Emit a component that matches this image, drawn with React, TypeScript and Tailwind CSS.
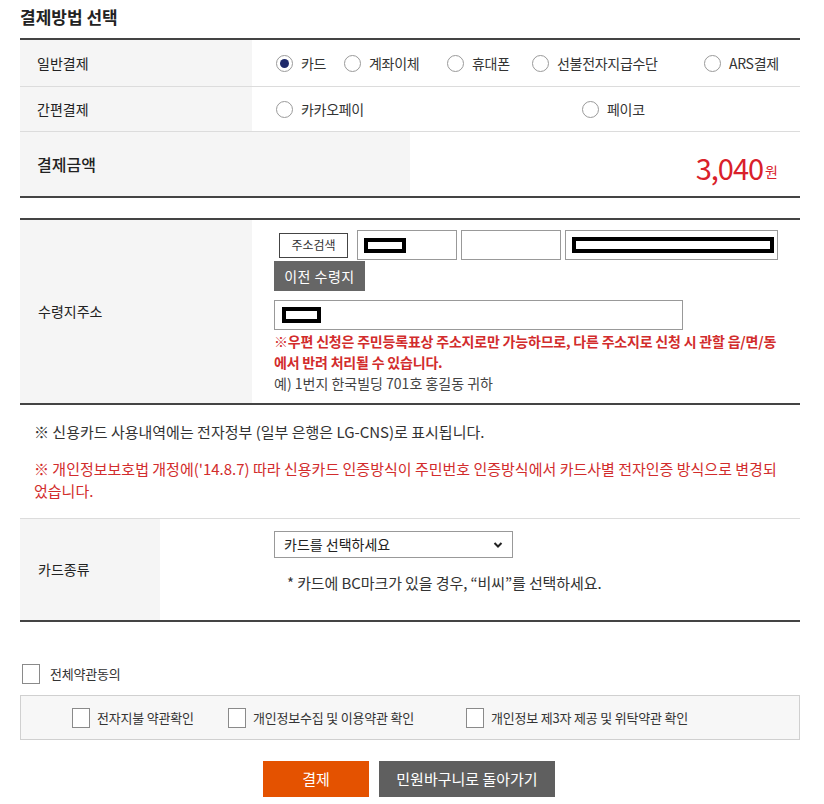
import React from "react";

const font = { fontFamily: '"Noto Sans CJK KR", "Noto Sans", sans-serif' };

function Radio({ checked = false, label, w }: { checked?: boolean; label: string; w: string }) {
  return (
    <label className={`flex items-center gap-[8px] ${w}`}>
      <span className="w-[17px] h-[17px] rounded-full border border-[#9a9a9a] bg-white flex items-center justify-center">
        {checked && <span className="w-[9px] h-[9px] rounded-full bg-[#1f2a6b]" />}
      </span>
      <span className="text-[14px] text-[#333] tracking-[-0.3px]">{label}</span>
    </label>
  );
}

function Check({ label, className = "" }: { label: string; className?: string }) {
  return (
    <label className={`flex items-center gap-[7px] ${className}`}>
      <span className="w-[18px] h-[20px] border border-[#8a8a8a] bg-white" />
      <span className="text-[13px] text-[#333] tracking-[-0.2px]">{label}</span>
    </label>
  );
}

function Redact({ className }: { className: string }) {
  return <span className={`block border-[4px] border-black bg-white ${className}`} />;
}

export default function App() {
  return (
    <div style={font} className="w-[824px] h-[804px] bg-white pl-[20px] pr-[24px] text-[#333] overflow-hidden">
      <h2 className="pt-[6px] h-[38px] text-[17px] font-bold text-[#222] leading-[22px]">결제방법 선택</h2>

      {/* 결제방법 */}
      <div className="border-t-2 border-[#444]">
        <div className="flex h-[47px] border-b border-[#dcdcdc]">
          <div className="w-[232px] bg-[#f5f5f5] flex items-center pl-[17px] text-[14px] text-[#222]">일반결제</div>
          <div className="flex-1 flex items-center pl-[24px]">
            <Radio checked label="카드" w="w-[68px]" />
            <Radio label="계좌이체" w="w-[103px]" />
            <Radio label="휴대폰" w="w-[85px]" />
            <Radio label="선불전자지급수단" w="w-[172px]" />
            <Radio label="ARS결제" w="w-[76px]" />
          </div>
        </div>
        <div className="flex h-[45px] border-b border-[#dcdcdc]">
          <div className="w-[232px] bg-[#f5f5f5] flex items-center pl-[17px] text-[14px] text-[#222]">간편결제</div>
          <div className="flex-1 flex items-center pl-[24px]">
            <Radio label="카카오페이" w="w-[306px]" />
            <Radio label="페이코" w="w-[80px]" />
          </div>
        </div>
        <div className="flex h-[66px] border-b-2 border-[#444]">
          <div className="w-[390px] bg-[#f5f5f5] flex items-center pl-[17px] text-[16px] font-medium text-[#222]">결제금액</div>
          <div className="flex-1 flex items-center justify-end pr-[22px] pt-[6px]">
            <span className="text-[29px] text-[#d9202a] leading-none tracking-[-1px]">3,040</span>
            <span className="text-[14px] text-[#d9202a] ml-[2px] mt-[8px]">원</span>
          </div>
        </div>
      </div>

      {/* 수령지주소 */}
      <div className="mt-[20px] border-t-2 border-[#444] border-b-2 border-b-[#444] flex h-[187px]">
        <div className="w-[232px] bg-[#f5f5f5] flex items-center pl-[18px] text-[14px] text-[#222]">수령지주소</div>
        <div className="flex-1 pl-[22px] pt-[10px]">
          <div className="flex items-center gap-[4px]">
            <button className="ml-[5px] mr-[5px] w-[69px] h-[25px] border border-[#444] bg-white text-[12px] text-[#333]">주소검색</button>
            <div className="w-[100px] h-[30px] border border-[#999] flex items-center pl-[6px]">
              <Redact className="w-[42px] h-[15px]" />
            </div>
            <div className="w-[100px] h-[30px] border border-[#999]" />
            <div className="w-[213px] h-[30px] border border-[#999] flex items-center pl-[6px]">
              <Redact className="w-[202px] h-[16px]" />
            </div>
          </div>
          <button className="mt-[1px] w-[91px] h-[30px] bg-[#666] text-white text-[14px] tracking-[0.5px]">이전 수령지</button>
          <div className="mt-[9px] w-[409px] h-[30px] border border-[#999] flex items-center pl-[7px]">
            <Redact className="w-[39px] h-[16px]" />
          </div>
          <p className="mt-[1px] text-[14px] font-bold text-[#d22c2c] leading-[21px] tracking-[-0.2px]">
            ※우편 신청은 주민등록표상 주소지로만 가능하므로, 다른 주소지로 신청 시 관할 읍/면/동
            <br />
            에서 반려 처리될 수 있습니다.
          </p>
          <p className="text-[14px] text-[#444] leading-[21px]">예) 1번지 한국빌딩 701호 홍길동 귀하</p>
        </div>
      </div>

      {/* 안내 */}
      <div className="border-b border-[#dcdcdc] pl-[14px] pt-[16px] pb-[16px]">
        <p className="text-[15px] text-[#333] leading-[22px]">
          ※ 신용카드 사용내역에는 전자정부 (일부 은행은 LG-CNS)로 표시됩니다.
        </p>
        <p className="mt-[15px] text-[15px] text-[#d22c2c] leading-[22px]">
          ※ 개인정보보호법 개정에('14.8.7) 따라 신용카드 인증방식이 주민번호 인증방식에서 카드사별 전자인증 방식으로 변경되
          <br />
          었습니다.
        </p>
      </div>

      {/* 카드종류 */}
      <div className="flex h-[103px] border-b-2 border-[#444]">
        <div className="w-[140px] bg-[#f5f5f5] flex items-center pl-[18px] text-[14px] text-[#222]">카드종류</div>
        <div className="flex-1 pl-[114px] pt-[12px]">
          <div className="relative w-[239px] h-[27px] border border-[#999] flex items-center pl-[9px] text-[14px] text-[#222]">
            카드를 선택하세요
            <svg className="absolute right-[9px] top-[9px]" width="10" height="8" viewBox="0 0 10 8">
              <path d="M1.5 2 L5 5.5 L8.5 2" fill="none" stroke="#222" strokeWidth="2" />
            </svg>
          </div>
          <p className="mt-[14px] ml-[13px] text-[15px] text-[#333] tracking-[-0.1px]">
            * 카드에 BC마크가 있을 경우, “비씨”를 선택하세요.
          </p>
        </div>
      </div>

      {/* 약관 */}
      <Check label="전체약관동의" className="mt-[42px] ml-[2px] gap-[10px]" />
      <div className="mt-[11px] h-[45px] border border-[#d0d0d0] bg-[#f7f7f7] flex items-center pl-[51px]">
        <Check label="전자지불 약관확인" className="w-[156px]" />
        <Check label="개인정보수집 및 이용약관 확인" className="w-[238px]" />
        <Check label="개인정보 제3자 제공 및 위탁약관 확인" />
      </div>

      <div className="mt-[21px] flex justify-center gap-[10px] pr-[2px]">
        <button className="w-[106px] h-[36px] bg-[#e45200] text-white text-[15px]">결제</button>
        <button className="w-[176px] h-[36px] bg-[#5f5f5f] text-white text-[15px]">민원바구니로 돌아가기</button>
      </div>
    </div>
  );
}
